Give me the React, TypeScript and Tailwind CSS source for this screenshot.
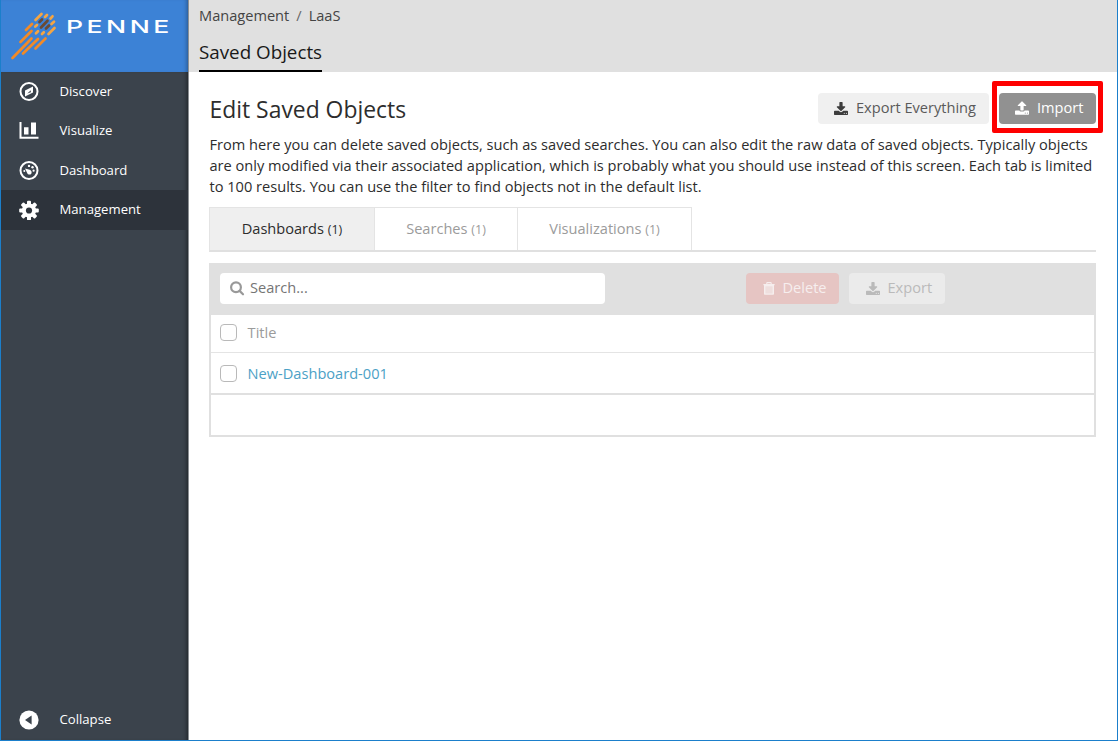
import type { ReactNode } from "react";

function DownloadIcon({ className }: { className?: string }) {
  return (
    <svg viewBox="0 0 1664 1536" className={className} fill="currentColor">
      <path d="M1280 1344q0-26-19-45t-45-19-45 19-19 45 19 45 45 19 45-19 19-45zm256 0q0-26-19-45t-45-19-45 19-19 45 19 45 45 19 45-19 19-45zm128-224v320q0 40-28 68t-68 28h-1472q-40 0-68-28t-28-68v-320q0-40 28-68t68-28h465l135 136q58 56 136 56t136-56l136-136h464q40 0 68 28t28 68zm-325-569q17 41-14 70l-448 448q-18 19-45 19t-45-19l-448-448q-31-29-14-70 17-39 59-39h256v-448q0-26 19-45t45-19h256q26 0 45 19t19 45v448h256q42 0 59 39z" />
    </svg>
  );
}

function UploadIcon({ className }: { className?: string }) {
  return (
    <svg viewBox="0 0 1664 1600" className={className} fill="currentColor">
      <path d="M1280 1408q0-26-19-45t-45-19-45 19-19 45 19 45 45 19 45-19 19-45zm256 0q0-26-19-45t-45-19-45 19-19 45 19 45 45 19 45-19 19-45zm128-224v320q0 40-28 68t-68 28h-1472q-40 0-68-28t-28-68v-320q0-40 28-68t68-28h427q21 56 70.5 92t110.5 36h256q61 0 110.5-36t70.5-92h427q40 0 68 28t28 68zm-325-648q-17 40-59 40h-256v448q0 26-19 45t-45 19h-256q-26 0-45-19t-19-45v-448h-256q-42 0-59-40-17-39 14-69l448-448q18-19 45-19t45 19l448 448q31 30 14 69z" />
    </svg>
  );
}

function TrashIcon() {
  return (
    <svg viewBox="0 0 12 13" className="h-[13px] w-3">
      <path d="M3.8 2V1.2Q3.8.6 4.4.6h3.2q.6 0 .6.6V2" fill="none" stroke="#f6eeee" strokeWidth="1.1" />
      <path d="M.4 2h11.2v1.3H11V12q0 .8-.8.8H1.8Q1 12.800 1 12V3.300H.4z" fill="#f6eeee" />
      <path d="M2.400 4.300h7.200v7.200H2.400z" fill="#efdfde" />
    </svg>
  );
}

function Logo() {
  const bars: [number, number, number, number, string][] = [
    [11.500, 58, 30.500, 38.500, "#f28a27"],
    [22, 53.500, 37, 39, "#f28a27"],
    [34.500, 48.500, 44.500, 38.500, "#f28a27"],
    [19.500, 42, 30.500, 31, "#f28a27"],
    [25, 30, 31, 24, "#f28a27"],
    [34.500, 20, 40.500, 14, "#f5a543"],
    [44, 17, 46, 15, "#f5a543"],
    [49.500, 18.500, 51.500, 16.300, "#f5a543"],
    [34.300, 26.500, 36, 25, "#f5a543"],
    [50.500, 24, 53, 21.700, "#f5a543"],
    [35, 33.200, 37, 31.300, "#f5a543"],
    [41, 34, 42.800, 32.200, "#f5a543"],
    [47.500, 34, 53.500, 28, "#f5a543"],
    [38.500, 22, 41, 19.500, "#6b4a33"],
    [40, 27.500, 46.500, 20.800, "#6b4a33"],
    [45, 28.500, 48, 25.500, "#6b4a33"],
  ];
  return (
    <svg viewBox="0 0 64 71" className="h-[71px] w-16 shrink-0" strokeWidth="2.7" strokeLinecap="round">
      {bars.map(([x1, y1, x2, y2, color], i) => (
        <line key={i} x1={x1} y1={y1} x2={x2} y2={y2} stroke={color} />
      ))}
    </svg>
  );
}

const iconClass = "h-5 w-5 shrink-0";

const compass = (
  <svg viewBox="0 0 20 20" className={iconClass}>
    <circle cx="10" cy="10.500" r="8.500" fill="none" stroke="#fff" strokeWidth="2" />
    <path d="M14 5.500v6L6 15.500v-6z" fill="#fff" />
    <path d="M11.800 9.300v2L8.300 12.400z" fill="#3b434c" />
  </svg>
);

const chart = (
  <svg viewBox="0 0 20 20" className={iconClass} fill="#fff">
    <path d="M.5 1h2v14.700h17v2.100H.5z" />
    <path d="M5 6.300h4.500v7.200H5zM12 1.500h5v12h-5z" />
  </svg>
);

const gauge = (
  <svg viewBox="0 0 20 20" className={iconClass}>
    <circle cx="10" cy="10.500" r="8.500" fill="none" stroke="#fff" strokeWidth="2" />
    <path d="M6 8.500l4.700 1.200q2.800 1.600 1.600 4-1.500 1.700-3.600.2z" fill="#fff" />
    <g fill="#fff">
      <circle cx="10" cy="5.900" r="1.200" />
      <circle cx="13.500" cy="7.300" r="1.200" />
      <circle cx="14.600" cy="10.700" r="1.100" />
      <circle cx="5.300" cy="11" r="1" />
    </g>
  </svg>
);

const gear = (
  <svg viewBox="0 0 20 20" className={iconClass}>
    <g fill="#fff">
      {[0, 45, 90, 135].map((a) => (
        <rect key={a} x="8" y=".7" width="4" height="19.600" rx="1" transform={`rotate(${a} 10 10.500)`} />
      ))}
      <circle cx="10" cy="10.500" r="7.100" />
    </g>
    <circle cx="10" cy="10.500" r="3.100" fill="#2d333b" />
  </svg>
);

const collapse = (
  <svg viewBox="0 0 20 20" className={iconClass}>
    <circle cx="10" cy="10" r="9.600" fill="#fff" />
    <path d="M12.600 5.600v8.800L6 10z" fill="#3b434c" />
  </svg>
);

function NavItem({ icon, label, active }: { icon: ReactNode; label: string; active?: boolean }) {
  return (
    <div className={`flex h-[39.600px] items-center pl-[18px] ${active ? "bg-[#2d333b]" : ""}`}>
      {icon}
      <span className="ml-[20.500px] pb-[1.500px] text-[13.150px] leading-5 text-white">{label}</span>
    </div>
  );
}

function Tab({ label, width, active }: { label: string; width: string; active?: boolean }) {
  return (
    <div
      className={`flex h-[43px] items-center justify-center border-t border-r border-[#e4e4e4] pb-px text-[14.600px] ${width} ${
        active ? "bg-[#efefef] text-[#2d2d2d]" : "text-[#9b9b9b]"
      }`}
    >
      <span>
        {label} <span className="text-[12.500px]">(1)</span>
      </span>
    </div>
  );
}

function Checkbox() {
  return <span className="block h-[17px] w-[17px] shrink-0 rounded border border-[#b9b9b9] bg-white" />;
}

export default function App() {
  return (
    <div className="flex h-[741px] w-[1118px] overflow-hidden border-r border-b border-l border-[#1b7fcb] bg-white font-['Open_Sans',sans-serif] text-[#2d2d2d]">
      <aside className="flex w-[188px] shrink-0 flex-col border-r border-[#8c9094] bg-[#3b434c]">
        <div className="flex h-[71.500px] bg-[#3c82d6] shadow-[inset_-4px_0_4px_-3px_rgba(0,0,0,0.35)]">
          <Logo />
          <span className="mt-[15px] ml-[1px] h-6 origin-left scale-x-[1.520] font-['Inter',sans-serif] text-[17.500px] leading-6 font-medium tracking-[2.300px] text-white">
            PENNE
          </span>
        </div>
        <div className="flex flex-1 flex-col shadow-[inset_-4px_0_4px_-3px_rgba(0,0,0,0.5)]">
          <nav>
            <NavItem icon={compass} label="Discover" />
            <NavItem icon={chart} label="Visualize" />
            <NavItem icon={gauge} label="Dashboard" />
            <NavItem icon={gear} label="Management" active />
          </nav>
          <div className="mt-auto">
            <NavItem icon={collapse} label="Collapse" />
          </div>
        </div>
      </aside>

      <main className="min-w-0 flex-1">
        <header className="flex h-[72px] flex-col items-start bg-[#e0e0e0] pl-[10px]">
          <div className="mt-[5px] flex gap-[7px] text-[14.600px] leading-[21px] text-[#444]">
            <span>Management</span>
            <span className="text-[#666]">/</span>
            <span>LaaS</span>
          </div>
          <div className="mt-auto h-[33px] border-b-2 border-black text-[18.800px] leading-[27px] text-[#191919]">
            Saved Objects
          </div>
        </header>

        <section className="pr-[21px] pl-5">
          <div className="flex h-[62px] items-start justify-between pl-[0.500px]">
            <h1 className="mt-[21px] text-[22.900px] leading-[34px]">Edit Saved Objects</h1>
            <div className="-mr-[7px] flex pt-[9px]">
              <button className="mt-3 flex h-[31px] w-[171px] items-center rounded bg-[#f0f0f0] pb-px pl-4 text-[14.600px] whitespace-nowrap text-[#5a5a5a]">
                <DownloadIcon className="mr-2 h-[13px] w-[14px] text-[#3d3d3d]" />
                Export Everything
              </button>
              <div className="ml-[3px] h-[52px] w-[111px] rounded-[2px] border-[5px] border-[#fe0000] pt-[7px] pl-[2px]">
                <button className="flex h-[31px] w-[97px] items-center rounded bg-[#919191] pb-px pl-4 text-[14.600px] text-white">
                  <UploadIcon className="mr-2 h-[14px] w-[14px]" />
                  Import
                </button>
              </div>
            </div>
          </div>

          <p className="pl-[0.500px] text-[14.600px] leading-[21px] whitespace-nowrap">
            From here you can delete saved objects, such as saved searches. You can also edit the raw data of saved
            objects. Typically objects
            <br />
            are only modified via their associated application, which is probably what you should use instead of this
            screen. Each tab is limited
            <br />
            to 100 results. You can use the filter to find objects not in the default list.
          </p>

          <div className="mt-[10px] flex h-[45px] border-b-2 border-l border-b-[#e0e0e0] border-l-[#e4e4e4]">
            <Tab label="Dashboards" width="w-[165px]" active />
            <Tab label="Searches" width="w-[143px]" />
            <Tab label="Visualizations" width="w-[174px]" />
          </div>

          <div className="mt-[11px] h-[174px] border-2 border-[#e0e0e0]">
            <div className="flex h-[50px] items-start bg-[#e0e0e0] pt-2 pl-[9px]">
              <div className="flex h-[31px] w-[385px] items-center rounded bg-white pl-[10px] text-[14.600px] text-[#757575]">
                <svg viewBox="0 0 15 15" className="mr-[5px] mb-px h-[15px] w-[15px]" fill="none" stroke="#999" strokeWidth="2.200">
                  <circle cx="6" cy="6.300" r="4.900" />
                  <path d="M9.600 9.900l3.400 3.400" strokeLinecap="round" />
                </svg>
                <span className="pb-px">Search...</span>
              </div>
              <button className="ml-[141px] flex h-[31px] w-[93px] items-center rounded bg-[#e6c5c3] pb-px pl-[17px] text-[14.600px] text-[#f6eeee]">
                <TrashIcon />
                <span className="ml-[7.500px]">Delete</span>
              </button>
              <button className="ml-[10px] flex h-[31px] w-24 items-center rounded bg-[#ebebeb] pb-px pl-[17px] text-[14.600px] text-[#bababa]">
                <DownloadIcon className="mr-[7.500px] h-[13px] w-[14px]" />
                Export
              </button>
            </div>
            <div className="flex h-[38px] items-center gap-[11px] border-b border-[#e4e4e4] pb-[2px] pl-[8.600px] text-[14.600px] text-[#9b9b9b]">
              <Checkbox />
              <span className="pt-px">Title</span>
            </div>
            <div className="flex h-[42px] items-center gap-[11px] border-b-2 border-[#e0e0e0] pt-px pl-[8.600px] text-[14.600px] text-[#4ca1c6]">
              <Checkbox />
              <span>New-Dashboard-001</span>
            </div>
          </div>
        </section>
      </main>
    </div>
  );
}
